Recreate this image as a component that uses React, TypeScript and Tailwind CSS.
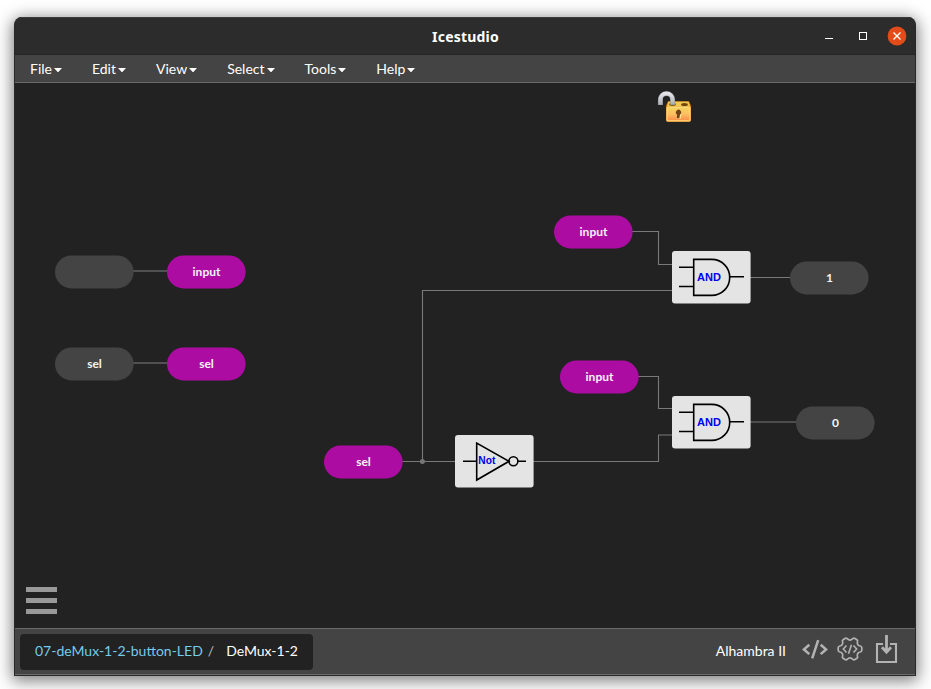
import React from "react";

const menus = ["File", "Edit", "View", "Select", "Tools", "Help"];

function TitleBar() {
  return (
    <header className="relative flex h-[37px] shrink-0 items-center justify-center border-t border-[#3b3b3b] bg-[#2c2c2c] pt-[2px] pl-px">
      <h1 className="font-['Noto_Sans',sans-serif] text-[14px] leading-5 font-bold tracking-[0.2px] text-white">Icestudio</h1>
      <svg className="absolute top-[8px] right-[7px]" width="86" height="22" viewBox="822 26 86 22" fill="none">
        <path d="M825 38.5h8" stroke="#fff" />
        <rect x="859.5" y="32.5" width="7" height="7" stroke="#fff" />
        <circle cx="897" cy="36" r="9.4" fill="#e34c19" />
        <path d="M893.5 32.5l7 7M900.5 32.5l-7 7" stroke="#fff" strokeWidth="1.4" />
      </svg>
    </header>
  );
}

function MenuBar() {
  return (
    <nav className="flex h-[29px] shrink-0 items-center border-t border-b border-t-[#242424] border-b-[#6a6a6a] bg-[#444]">
      {menus.map((name) => (
        <button key={name} className="flex h-full items-center px-[15px] text-[14px] leading-5 text-white">
          {name}
          <svg className="mt-[2px] ml-[2px]" width="8" height="4" viewBox="0 0 8 4" fill="#fff">
            <path d="M0 0h8L4 4.4z" />
          </svg>
        </button>
      ))}
    </nav>
  );
}

type PillProps = { x: number; y: number; label: string; port?: boolean };

function Pill({ x, y, label, port }: PillProps) {
  return (
    <div className="absolute h-[33px] w-[79px]" style={{ left: x - 15, top: y - 83 }}>
      <svg className="absolute inset-0 overflow-visible" width="79" height="33">
        <rect x="0" y="0.6" width="78.6" height="32.8" rx="16.4" fill={port ? "#444" : "#ad0ca3"} />
      </svg>
      <span className="relative flex h-[33px] items-center justify-center text-[12px] leading-4 font-bold text-[#f4f4f4]">
        {label}
      </span>
    </div>
  );
}

function Gate({ x, y, kind }: { x: number; y: number; kind: "AND" | "NOT" }) {
  return (
    <div className="absolute h-[53px] w-[79px]" style={{ left: x - 15, top: y - 83 }}>
      <svg width="79" height="53" viewBox="0 0 79 53" fill="none" stroke="#000" strokeWidth="1.6">
        <rect width="78.6" height="52.5" rx="3" fill="#e4e4e4" stroke="none" />
        {kind === "AND" ? (
          <>
            <path d="M7 16.2h15M7 35.5h15M58 25.8h14M21.7 8.4v36h18c10 0 18-8 18-18s-8-18-18-18z" />
            <text x="25" y="30" fontSize="11" fontWeight="700" fontFamily="Liberation Sans, sans-serif" fill="#0000f0" stroke="none" textLength="24">AND</text>
          </>
        ) : (
          <>
            <path d="M8 26.3h13M63 26.3h8M21.7 8v37L54 26.3z" />
            <circle cx="58.4" cy="26.3" r="4.5" />
            <text x="23.3" y="29.2" fontSize="10.5" fontWeight="700" fontFamily="Liberation Sans, sans-serif" fill="#0000e4" stroke="none" textLength="17" lengthAdjust="spacingAndGlyphs">Not</text>
          </>
        )}
      </svg>
    </div>
  );
}

function Wires() {
  return (
    <svg className="absolute inset-0" width="900" height="545" viewBox="15 83 900 545" fill="none">
      <path d="M133 271h35M133 363h35" stroke="#626262" strokeWidth="1.5" />
      <path d="M632 231.5h26.5v33H673M422.5 461.5v-171H673M402 461.5h54M533 461.5h125.5v-26.5H673M638 376.5h20.5v32H673M750 277.5h41M750 422h47" stroke="#797979" strokeWidth="1.1" />
      <circle cx="422.4" cy="461.4" r="2.5" fill="#777" />
    </svg>
  );
}

function OpenLock() {
  return (
    <svg className="absolute top-[7px] left-[641px]" width="38" height="34" viewBox="656 90 38 34">
      <defs>
        <linearGradient id="lockBody" x1="0" y1="0" x2="0" y2="1">
          <stop offset="0" stopColor="#f3d45c" />
          <stop offset="0.5" stopColor="#fdc062" />
          <stop offset="1" stopColor="#fb8d48" />
        </linearGradient>
        <linearGradient id="lockShackle" x1="0" y1="0" x2="0" y2="1">
          <stop offset="0" stopColor="#e4e4e8" />
          <stop offset="1" stopColor="#a9adb3" />
        </linearGradient>
      </defs>
      <path d="M668 101.2h21l2 5v14q0 1.7-1.8 1.7h-21.4q-1.8 0-1.8-1.7v-14z" fill="#d98620" />
      <path d="M668.5 101.8h20l1.6 4.5h-23.2z" fill="#f0c94e" />
      <rect x="667" y="107" width="23" height="13.8" rx="0.8" fill="url(#lockBody)" stroke="#ffe28c" strokeWidth="1" />
      <ellipse cx="672.5" cy="104.5" rx="3.4" ry="1.4" fill="#805317" />
      <ellipse cx="684.5" cy="104.4" rx="3.4" ry="1.5" fill="#704610" />
      <path d="M660.4 105v-5.2c0-3.7 2.7-6.2 6.1-6.2s6.1 2.5 6.1 6.2v4.9" fill="none" stroke="#8b8e94" strokeWidth="4.9" />
      <path d="M660.4 104.8v-5c0-3.7 2.7-6.2 6.1-6.2s6.1 2.5 6.1 6.2v4.7" fill="none" stroke="url(#lockShackle)" strokeWidth="4" />
      <path d="M680.9 118.6l.3-4.4a2.6 2.6 0 0 0-1.2-3.6l-3.6 8z" fill="#ffe391" />
      <path d="M676.8 118.2l.3-3.6a2.6 2.6 0 1 1 2.9 0l-.7 3.6z" fill="#714216" />
    </svg>
  );
}

function Canvas() {
  return (
    <main className="relative h-[545px] shrink-0 bg-[#222]">
      <Wires />
      <OpenLock />
      <Pill x={55} y={255} label="" port />
      <Pill x={167} y={255} label="input" />
      <Pill x={55} y={347} label="sel" port />
      <Pill x={167} y={347} label="sel" />
      <Pill x={554} y={215} label="input" />
      <Pill x={560} y={360} label="input" />
      <Pill x={324} y={445} label="sel" />
      <Pill x={790} y={261} label="1" port />
      <Pill x={796} y={406} label="0" port />
      <Gate x={672} y={251} kind="AND" />
      <Gate x={672} y={396} kind="AND" />
      <Gate x={455} y={435} kind="NOT" />
      <button aria-label="menu" className="absolute bottom-[14px] left-[11px] flex w-[31px] flex-col gap-[6px]">
        <span className="h-[5px] bg-[#999]" />
        <span className="h-[5px] bg-[#999]" />
        <span className="h-[5px] bg-[#999]" />
      </button>
    </main>
  );
}

function FooterIcons() {
  return (
    <svg className="mb-1" width="98" height="34" viewBox="801 633 98 34" fill="none" stroke="#b3b3b3">
      <path d="M809.3 644.7l-5.3 4.7 5.3 4.7M820.7 644.7l5.3 4.7-5.3 4.7" strokeWidth="2.6" />
      <path d="M818.2 640.2l-6 18.2" strokeWidth="2.5" />
      <path
        transform="translate(850 649)"
        d="M-5-10.4Q-3.8-11.5-2.8-10.3Q0-7.6 2.8-10.3Q3.8-11.5 5-10.4L7.2-9.1Q8.1-8.3 7.3-6.9Q7-3.5 10.3-3Q11.8-2.6 11.8-1.3V1.3Q11.8 2.6 10.3 3Q7 3.5 7.3 6.9Q8.1 8.3 7.2 9.1L5 10.4Q3.8 11.5 2.8 10.3Q0 7.6-2.8 10.3Q-3.8 11.5-5 10.4L-7.2 9.1Q-8.1 8.3-7.3 6.9Q-7 3.5-10.3 3Q-11.8 2.6-11.8 1.3V-1.3Q-11.8-2.6-10.3-3Q-7-3.5-7.3-6.9Q-8.1-8.3-7.2-9.1Z"
        strokeWidth="1.7"
      />
      <path d="M846.5 645.5l-3.2 3.5 3.2 3.5M853.5 645.5l3.2 3.5-3.2 3.5M851.5 644.7l-3 9" strokeWidth="1.6" />
      <path d="M883 644h-6v18h19v-18h-6" strokeWidth="2.1" />
      <path d="M886.5 635v16M882 647.2l4.5 5 4.5-5" strokeWidth="2.8" />
    </svg>
  );
}

function Footer() {
  return (
    <footer className="flex h-[47px] shrink-0 items-center justify-between border-y border-[#6a6a6a] bg-[#444] pl-[5px] pr-4">
      <div className="flex h-9 w-[293px] items-center rounded-[4px] bg-[#222] px-[15px] pb-[2px] text-[14px] leading-5">
        <span className="text-[#75cbec]">07-deMux-1-2-button-LED</span>
        <span className="ml-[5px] text-[#bbb]">/</span>
        <span className="ml-auto text-white">DeMux-1-2</span>
      </div>
      <div className="flex items-center gap-[15px]">
        <span className="pb-[2px] text-[14px] leading-5 text-white">Alhambra II</span>
        <FooterIcons />
      </div>
    </footer>
  );
}

export default function App() {
  return (
    <div className="h-[689px] w-[931px] overflow-hidden bg-white pt-[17px] pl-[14px] font-[Lato,sans-serif]">
      <div className="flex h-[659px] w-[902px] flex-col overflow-hidden rounded-t-[8px] border border-t-0 border-[#292929] bg-[#292929] shadow-[0_3px_16px_2px_rgba(0,0,0,0.5)]">
        <TitleBar />
        <MenuBar />
        <Canvas />
        <Footer />
      </div>
    </div>
  );
}
